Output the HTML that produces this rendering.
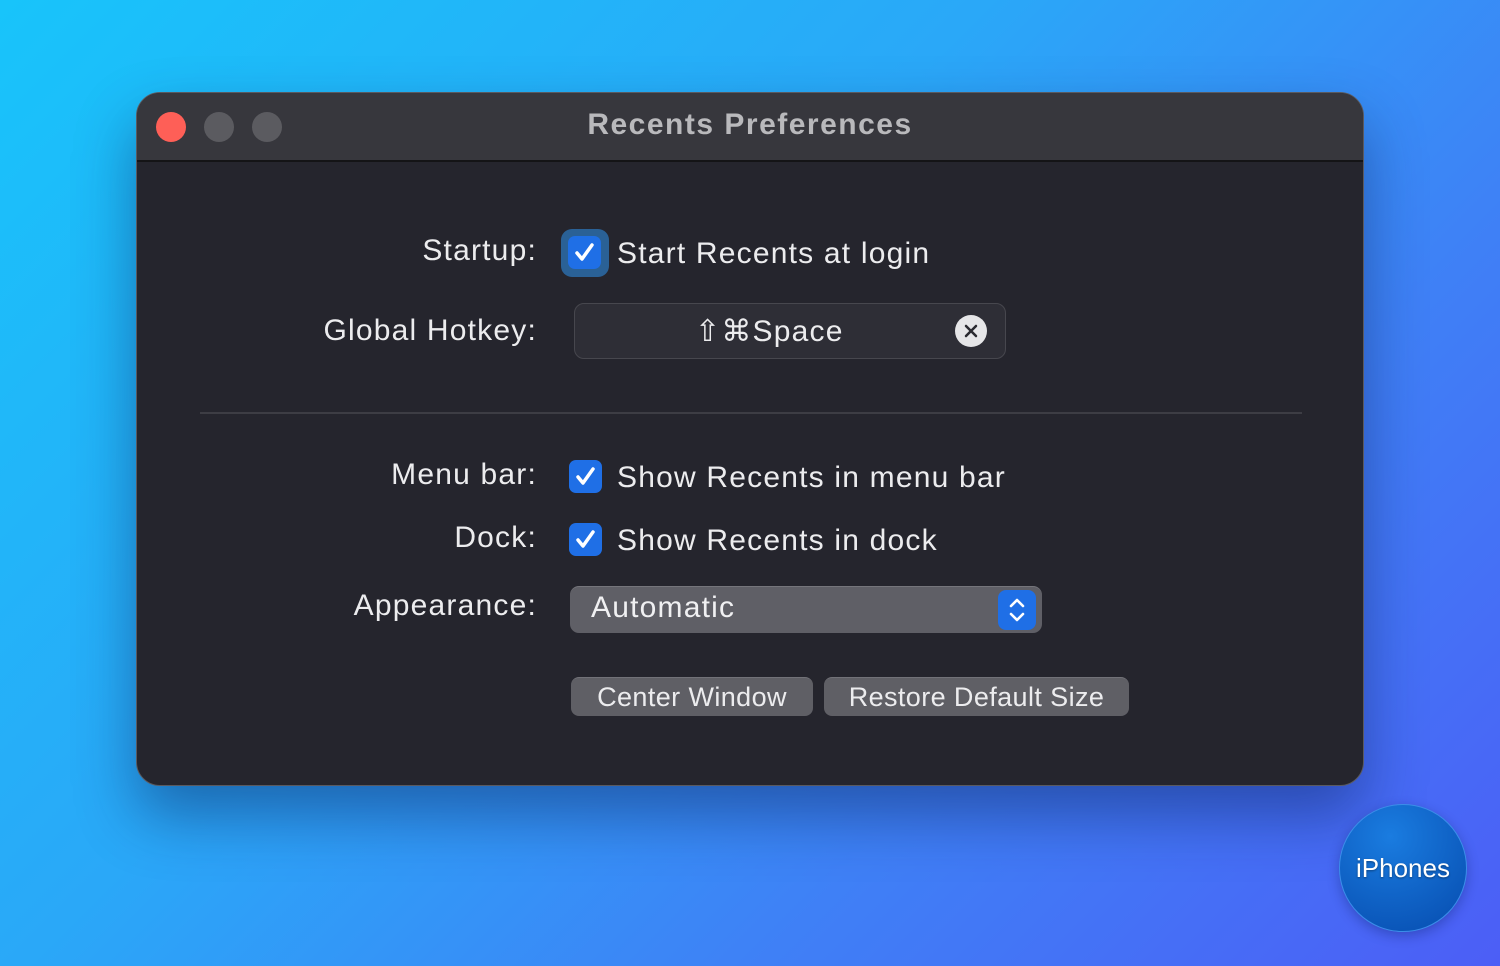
<!DOCTYPE html>
<html><head><style>
*{margin:0;padding:0;box-sizing:border-box}
body{width:1500px;height:966px;overflow:hidden;position:relative;font-family:"Liberation Sans",sans-serif;
background:linear-gradient(135deg,#18c4fa 0%,#2aa8f8 40%,#3f80f6 70%,#4c5ef6 100%);}
.win{position:absolute;left:136px;top:92px;width:1228px;height:694px;background:#25252d;border-radius:24px;border:1.5px solid #5a5a60;box-shadow:0 30px 60px rgba(10,30,90,.45);overflow:hidden}
.tb{position:absolute;left:0;top:0;width:100%;height:69px;background:#37373d;border-bottom:2px solid #141416}
.dot{position:absolute;top:19px;width:30px;height:30px;border-radius:50%;background:#5b5b60}
.title{position:absolute;left:0;width:100%;top:15px;text-align:center;color:#b9b9bc;font-weight:bold;font-size:30px;letter-spacing:1.5px}
.t{position:absolute;color:#ececee;font-size:30px;letter-spacing:1.2px;white-space:nowrap;line-height:36px}
.lab{right:826px;text-align:right}
.cb{position:absolute;width:33px;height:33px;border-radius:7px;background:#1f6fe6}
.cb svg{position:absolute;left:4px;top:4px}
.btn{position:absolute;background:#5f5f65;border-radius:8px;color:#ececee;font-size:27px;text-align:center;line-height:38px;letter-spacing:.4px;border-top:1px solid #727278}
</style></head><body>
<div class="win">
 <div class="tb">
  <div class="dot" style="left:19px;background:#fe5f57"></div>
  <div class="dot" style="left:67px"></div>
  <div class="dot" style="left:115px"></div>
  <div class="title">Recents Preferences</div>
 </div>
 <div class="t lab" style="top:140px">Startup:</div>
 <div style="position:absolute;left:424px;top:136px;width:48px;height:48px;border-radius:11px;background:#2a6196"></div>
 <div class="cb" style="left:431px;top:143px"><svg width="25" height="25" viewBox="0 0 25 25"><path d="M5 13 L10 19 L20 5" stroke="#fff" stroke-width="3.5" fill="none" stroke-linecap="round" stroke-linejoin="round"/></svg></div>
 <div class="t" style="left:480px;top:143px">Start Recents at login</div>

 <div class="t lab" style="top:220px">Global Hotkey:</div>
 <div style="position:absolute;left:437px;top:210px;width:432px;height:56px;border-radius:10px;background:#2e2e36;border:1.5px solid #47474e"></div>
 <div class="t" style="left:558px;top:221px">⇧⌘Space</div>
 <div style="position:absolute;left:818px;top:222px;width:32px;height:32px;border-radius:50%;background:#e6e6e8"><svg width="32" height="32" viewBox="0 0 32 32"><path d="M11 11L21 21M21 11L11 21" stroke="#2a2a30" stroke-width="2.5" stroke-linecap="round"/></svg></div>

 <div style="position:absolute;left:63px;top:319px;width:1102px;height:2px;background:#3d3d44"></div>

 <div class="t lab" style="top:364px">Menu bar:</div>
 <div class="cb" style="left:432px;top:367px"><svg width="25" height="25" viewBox="0 0 25 25"><path d="M5 13 L10 19 L20 5" stroke="#fff" stroke-width="3.5" fill="none" stroke-linecap="round" stroke-linejoin="round"/></svg></div>
 <div class="t" style="left:480px;top:367px">Show Recents in menu bar</div>

 <div class="t lab" style="top:427px">Dock:</div>
 <div class="cb" style="left:432px;top:430px"><svg width="25" height="25" viewBox="0 0 25 25"><path d="M5 13 L10 19 L20 5" stroke="#fff" stroke-width="3.5" fill="none" stroke-linecap="round" stroke-linejoin="round"/></svg></div>
 <div class="t" style="left:480px;top:430px">Show Recents in dock</div>

 <div class="t lab" style="top:495px">Appearance:</div>
 <div style="position:absolute;left:433px;top:493px;width:472px;height:47px;border-radius:9px;background:#5f5f66;border-top:1px solid #75757b"></div>
 <div class="t" style="left:454px;top:497px;color:#f0f0f2">Automatic</div>
 <div style="position:absolute;left:861px;top:497px;width:38px;height:40px;border-radius:8px;background:#1f6fe6"><svg width="38" height="40" viewBox="0 0 38 40"><path d="M13 16L19 10L25 16M13 24L19 30L25 24" stroke="#fff" stroke-width="2.6" fill="none" stroke-linecap="round" stroke-linejoin="round"/></svg></div>

 <div class="btn" style="left:434px;top:584px;width:242px;height:39px">Center Window</div>
 <div class="btn" style="left:687px;top:584px;width:305px;height:39px">Restore Default Size</div>
</div>
<div style="position:absolute;left:1339px;top:804px;width:128px;height:128px;border-radius:50%;background:radial-gradient(circle at 40% 25%,#1a7ce0,#0a55b8 80%);border:1.5px solid #3a8ee8;box-shadow:0 4px 12px rgba(0,20,80,.3);color:#fff;font-size:26px;text-align:center;line-height:126px;text-shadow:0 1px 2px rgba(0,0,0,.4)">iPhones</div>
</body></html>
